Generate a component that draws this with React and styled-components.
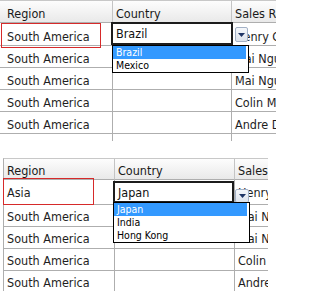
import React from 'react';
import styled, { createGlobalStyle } from 'styled-components';

const Global = createGlobalStyle`
  html, body { margin: 0; padding: 0; background: #fff; }
  body {
    width: 276px; height: 291px; overflow: hidden;
    font-family: "DejaVu Sans Condensed", "DejaVu Sans", sans-serif;
  }
`;

const Page = styled.div`
  display: flex;
  flex-direction: column;
  gap: 17px;
  width: 276px;
  height: 291px;
  overflow: hidden;
`;

const Panel = styled.div`
  position: relative;
  flex: none;
  width: ${p => p.$width}px;
  height: ${p => p.$height}px;
  margin-left: ${p => p.$left}px;
  overflow: hidden;
`;

const Table = styled.div`
  display: flex;
  flex-direction: column;
  width: max-content;
  border-top: 1px solid #c8c8c8;
  border-left: ${p => (p.$edge ? '1px solid #aeaeae' : 'none')};
`;

const Row = styled.div`
  display: grid;
  grid-template-columns: ${p => p.$cols};
  height: ${p => p.$h}px;
`;

const Cell = styled.div`
  box-sizing: border-box;
  display: flex;
  align-items: center;
  padding: ${p => p.$pt}px 3px 0;
  border-right: 1px solid #aeaeae;
  border-bottom: 1px solid #aeaeae;
  white-space: nowrap;
  overflow: hidden;
  font-size: 12.5px;
  color: #1e1e1e;
  background: #fff;
`;

const HeaderCell = styled(Cell)`
  border-right-color: #c4c4c4;
  background: linear-gradient(#fdfdfd, #e9e9e9);
  color: #1a1a1a;
`;

const RedBox = styled.div`
  position: absolute;
  box-sizing: border-box;
  left: ${p => p.$x}px;
  top: ${p => p.$y}px;
  width: ${p => p.$w}px;
  height: ${p => p.$h}px;
  border: 1px solid #d62a2a;
`;

const Editor = styled.div`
  position: absolute;
  box-sizing: border-box;
  left: ${p => p.$x}px;
  top: ${p => p.$y}px;
  width: ${p => p.$w}px;
  height: ${p => p.$h}px;
  border: 2px solid #1c1c1c;
  background: #fff;
  display: flex;
  align-items: center;
  padding-left: 3px;
  font-size: 12.5px;
  color: #111;
  z-index: 2;
`;

const DropButton = styled.div`
  position: absolute;
  box-sizing: border-box;
  left: ${p => p.$x}px;
  top: ${p => p.$y}px;
  width: ${p => p.$w}px;
  height: ${p => p.$h}px;
  border: 1px solid #a3b1c6;
  border-radius: 2px;
  background: linear-gradient(#f5f7fb, #dde3ec);
  display: flex;
  align-items: center;
  justify-content: center;
  z-index: 2;
`;

const List = styled.div`
  position: absolute;
  box-sizing: border-box;
  left: ${p => p.$x}px;
  top: ${p => p.$y}px;
  width: ${p => p.$w}px;
  border: 1px solid #000;
  background: #fff;
  padding-right: 2px;
  z-index: 3;
`;

const Item = styled.div`
  height: 13px;
  line-height: 13px;
  padding-left: 3px;
  font-size: 10.5px;
  white-space: nowrap;
  color: ${p => (p.$selected ? '#fff' : '#000')};
  background: ${p => (p.$selected ? '#3399ff' : 'transparent')};
`;

const Arrow = () => (
  <svg width="7" height="4" viewBox="0 0 7 4">
    <polygon points="0,0 7,0 3.5,4" fill="#1f3566" />
  </svg>
);

const Grid = ({ cols, gutter, pt, hpt, headerH, heights, rows, extraRow }) => (
  <Table $edge={!gutter}>
    <Row $cols={cols} $h={headerH}>
      {gutter && <HeaderCell $pt={0} />}
      <HeaderCell $pt={hpt}>Region</HeaderCell>
      <HeaderCell $pt={hpt}>Country</HeaderCell>
      <HeaderCell $pt={hpt}>Sales Rep</HeaderCell>
    </Row>
    {rows.map((r, i) => (
      <Row key={i} $cols={cols} $h={heights[i]}>
        {gutter && <Cell $pt={0} />}
        <Cell $pt={pt}>{r[0]}</Cell>
        <Cell $pt={pt}>{r[1]}</Cell>
        <Cell $pt={pt}>{r[2]}</Cell>
      </Row>
    ))}
    {extraRow && (
      <Row $cols={cols} $h={22}>
        {gutter && <Cell $pt={0} />}
        <Cell $pt={pt} />
        <Cell $pt={pt} />
        <Cell $pt={pt} />
      </Row>
    )}
  </Table>
);

const reps = ['Henry Gibson', 'Mai Nguyen', 'Mai Nguyen', 'Colin Miller', 'Andre Dubois'];

// The Country cell of the row being edited is shown by the editor overlay.
const rows1 = [
  ['South America', '', reps[0]],
  ['South America', '', reps[1]],
  ['South America', '', reps[2]],
  ['South America', '', reps[3]],
  ['South America', '', reps[4]],
];

const rows2 = [
  ['Asia', '', reps[0]],
  ['South America', '', reps[1]],
  ['South America', '', reps[2]],
  ['South America', '', reps[3]],
  ['South America', '', reps[4]],
];

export default function App() {
  return (
    <>
      <Global />
      <Page>
        <Panel $width={276} $height={141} $left={0}>
          <Grid
            cols="4px 109px 119px 100px"
            gutter
            pt={4}
            hpt={3}
            headerH={22}
            heights={[23, 22, 22, 22, 22]}
            rows={rows1}
            extraRow
          />
          <RedBox $x={1} $y={23} $w={100} $h={25} />
          <Editor $x={111} $y={22} $w={122} $h={23}>Brazil</Editor>
          <DropButton $x={235} $y={27} $w={13} $h={15}><Arrow /></DropButton>
          <List $x={112} $y={45} $w={137}>
            <Item $selected>Brazil</Item>
            <Item>Mexico</Item>
          </List>
        </Panel>
        <Panel $width={265} $height={133} $left={3}>
          <Grid
            cols="111px 120px 100px"
            pt={1}
            hpt={2}
            headerH={21}
            heights={[25, 22, 22, 22, 22]}
            rows={rows2}
          />
          <RedBox $x={0} $y={20} $w={91} $h={27} />
          <Editor $x={110} $y={23} $w={121} $h={22}>Japan</Editor>
          <DropButton $x={232} $y={31} $w={14} $h={14}><Arrow /></DropButton>
          <List $x={110} $y={44} $w={137}>
            <Item $selected>Japan</Item>
            <Item>India</Item>
            <Item>Hong Kong</Item>
          </List>
        </Panel>
      </Page>
    </>
  );
}
